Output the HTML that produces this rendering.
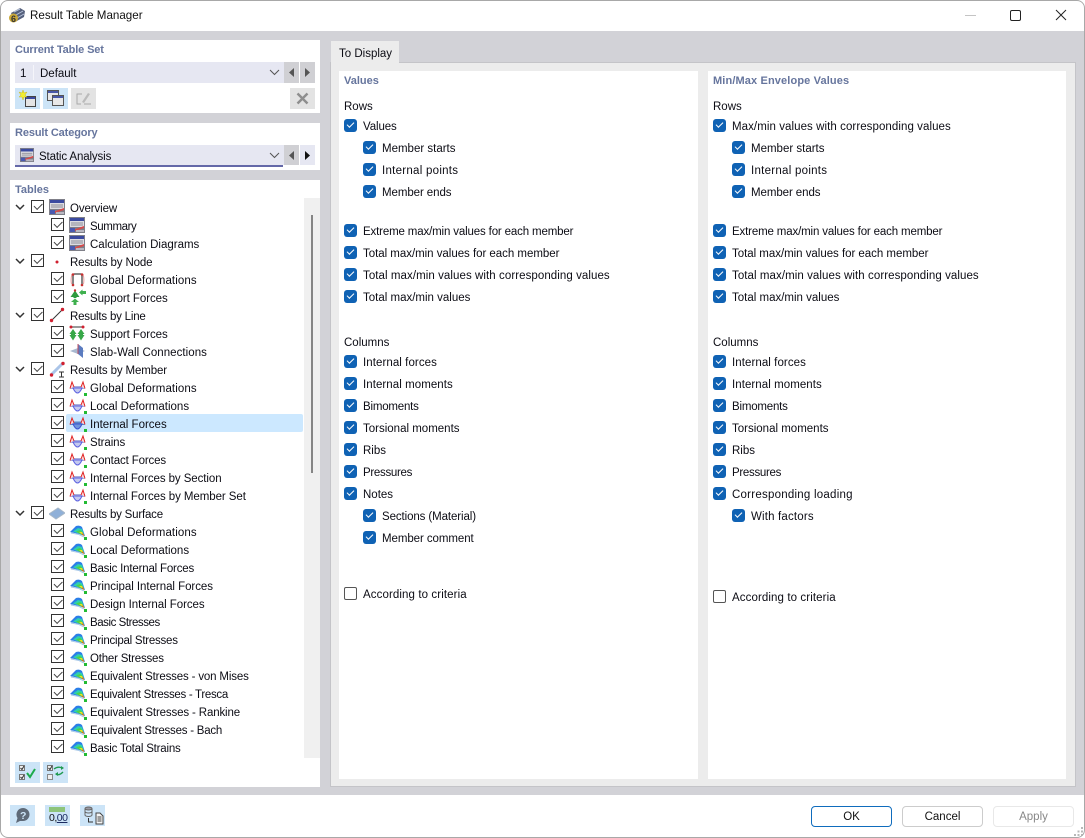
<!DOCTYPE html>
<html><head><meta charset="utf-8"><title>Result Table Manager</title>
<style>
html,body{margin:0;padding:0;width:1085px;height:838px;overflow:hidden;background:#fff}
body{position:relative;font-family:"Liberation Sans",sans-serif;font-size:11.5px;color:#0c0c14}
div,svg{position:absolute}
.t{line-height:16px;height:16px;white-space:nowrap;margin-top:1px}
.h{line-height:16px;height:16px;white-space:nowrap;font-weight:bold;color:#66759d;font-size:11px;margin-top:1px}
.p{background:#fff}
.cb{width:13px;height:13px;background:#0f62b4;border-radius:3px}
.cb:after{content:"";position:absolute;left:3px;top:2.5px;width:6px;height:3px;border-left:1px solid #fff;border-bottom:1px solid #fff;transform:rotate(-45deg)}
.cu{width:11px;height:11px;border:1px solid #555;border-radius:2px;background:#fff}
.k{width:11px;height:11px;border:1px solid #333;background:#fff}
.k:after{content:"";position:absolute;left:2px;top:1.5px;width:7px;height:3.5px;border-left:1px solid #444;border-bottom:1px solid #444;transform:rotate(-45deg)}
.ib{background:#cce4f7}
.btn{height:19px;line-height:21px;width:79px;text-align:center;border:1px solid #ccc;border-radius:4px;background:#fff}
</style></head><body>
<svg width="0" height="0" style="left:0;top:0">
<defs>
<symbol id="tb" viewBox="0 0 16 16"><rect x="0" y="0" width="16" height="16" fill="#7f7f88"/><rect x="1" y="1" width="14" height="3" fill="#3b4aa0"/><rect x="1" y="4" width="14" height="6" fill="#dcdce2"/><path d="M2 6h12M2 8h12" stroke="#8e8e98"/><path d="M1 14L15 9V11L6 14Z" fill="#d84a4a"/><rect x="1" y="11" width="5" height="4" fill="#4a5ab0"/><rect x="7" y="13" width="8" height="2" fill="#b8b8c2"/></symbol>
<symbol id="mb" viewBox="0 0 18 17"><rect x="1" y="7" width="15" height="3" fill="#a9aedd"/><path d="M4 9Q8.500 19 13 9Z" fill="#c4c9ee" stroke="#5a5fe0"/><path d="M1 9.500L3 3 5 8M12 8L14 3 16 9.500" fill="#fbdcdc" stroke="#e02020"/><rect x="15" y="14" width="3" height="3" fill="#22bb33"/></symbol>
<symbol id="mb2" viewBox="0 0 18 17"><rect x="1" y="6.500" width="15" height="3.500" fill="#5a86c8"/><path d="M4 9Q8.500 19 13 9Z" fill="#6f95dc" stroke="#3a4fd0"/><path d="M1 9.500L3 3 5 8M12 8L14 3 16 9.500" fill="#fbdcdc" stroke="#e02020"/><rect x="15" y="14" width="3" height="3" fill="#22bb33"/></symbol>
<symbol id="sf" viewBox="0 0 17 15"><path d="M0 7L6 1Q10 0 12 2L15 11 9 9Z" fill="#2b7fe8"/><path d="M3 6.500L8 3 12 4 14.500 11 9 8.500Z" fill="#2ed0b0"/><path d="M6 6.500L10 5 12.500 7 14.500 11 9 8.500Z" fill="#4fd24a"/><path d="M9 7L12 7 14.500 11Z" fill="#f0e020"/><path d="M11.500 9L13 8.500 14.500 11.500Z" fill="#f0501c"/><path d="M1 8L9 9.500 14 12" stroke="#a8c8e8" fill="none"/><rect x="14" y="12" width="3" height="3" fill="#22bb33"/></symbol>
</defs></svg>

<!-- window frame -->
<div style="left:0;top:31px;width:1085px;height:764px;background:#d2d2d7"></div>

<!-- title bar -->
<svg style="left:8px;top:7px" width="18" height="17" viewBox="0 0 18 17"><path d="M3 6L12 1 17 4 16 10 7 15Z" fill="#55607c"/><path d="M6 5L12 2M8 8L15 4M9 11L16 7" stroke="#b8c4dc"/><circle cx="5.500" cy="11" r="4.500" fill="#c9a83a"/><text x="3" y="15" font-size="9" font-family="Liberation Sans" font-weight="bold" fill="#333">6</text></svg>
<div class="t" style="left:30px;top:7px;font-size:11.6px;color:#111">Result Table Manager</div>
<div style="left:965px;top:15px;width:11px;height:1px;background:#c4c4c4"></div>
<div style="left:1010px;top:10px;width:9px;height:9px;border:1px solid #222;border-radius:2px"></div>
<svg style="left:1055px;top:9px" width="12" height="12"><path d="M1 1L11 11M11 1L1 11" stroke="#222" stroke-width="1"/></svg>

<!-- Current table set -->
<div class="p" style="left:10px;top:40px;width:310px;height:73px"></div>
<div class="h" style="left:15px;top:41px;letter-spacing:-.12px">Current Table Set</div>
<div style="left:15px;top:62px;width:269px;height:21px;background:#e6e7f2"></div>
<div style="left:33px;top:65px;width:1px;height:15px;background:#f5f5fa"></div>
<div class="t" style="left:20px;top:65px">1</div>
<div class="t" style="left:40px;top:65px">Default</div>
<svg style="left:269px;top:69px" width="11" height="7"><path d="M1 1L5.500 5.500 10 1" fill="none" stroke="#555"/></svg>
<div style="left:284px;top:62px;width:15px;height:21px;background:#d0d0d4"></div>
<div style="left:300px;top:62px;width:15px;height:21px;background:#d0d0d4"></div>
<svg style="left:288px;top:68px" width="7" height="9"><path d="M6 0V9L1 4.500Z" fill="#555"/></svg>
<svg style="left:304px;top:68px" width="7" height="9"><path d="M1 0V9L6 4.500Z" fill="#555"/></svg>
<div class="ib" style="left:15px;top:88px;width:25px;height:21px"></div>
<svg style="left:18px;top:90px" width="20" height="18" viewBox="0 0 20 18"><rect x="7.500" y="6.500" width="10" height="10" fill="#e4e4e4" stroke="#444"/><rect x="8" y="7" width="9" height="2" fill="#3b4aa0"/><path d="M5 0L6 3 9 2 7 5 9 7 6 7 5 10 4 7 1 7 3 5 1 2 4 3Z" fill="#f2ee30" stroke="#c8b820" stroke-width=".5"/></svg>
<div class="ib" style="left:43px;top:88px;width:25px;height:21px"></div>
<svg style="left:47px;top:90px" width="18" height="17" viewBox="0 0 18 17"><rect x="0.500" y="0.500" width="11" height="10" fill="#e8e8e8" stroke="#555"/><rect x="1" y="1" width="10" height="2" fill="#4a58a8"/><rect x="5.500" y="5.500" width="11" height="10" fill="#e8e8e8" stroke="#555"/><rect x="6" y="6" width="10" height="2" fill="#4a58a8"/></svg>
<div style="left:71px;top:88px;width:25px;height:21px;background:#e3e3e3"></div>
<svg style="left:76px;top:91px" width="16" height="15" viewBox="0 0 16 15"><path d="M6 3H1V13H5M8 13H15" fill="none" stroke="#aaa"/><path d="M6 11L12 2 14 3 8 12Z" fill="#bbb"/></svg>
<div style="left:290px;top:88px;width:25px;height:21px;background:#e3e3e3"></div>
<svg style="left:296px;top:92px" width="13" height="13"><path d="M1.500 1.500L11.500 11.500M11.500 1.500L1.500 11.500" stroke="#8e8e8e" stroke-width="2.400"/></svg>

<!-- Result category -->
<div class="p" style="left:10px;top:123px;width:310px;height:47px"></div>
<div class="h" style="left:15px;top:124px;letter-spacing:-.12px">Result Category</div>
<div style="left:15px;top:145px;width:269px;height:20px;background:#e6e7f2"></div>
<div style="left:15px;top:165px;width:268px;height:2px;background:#6468a8"></div>
<svg style="left:20px;top:148px" width="14" height="14"><use href="#tb"/></svg>
<div class="t" style="left:39px;top:148px;letter-spacing:-.13px">Static Analysis</div>
<svg style="left:269px;top:152px" width="11" height="7"><path d="M1 1L5.500 5.500 10 1" fill="none" stroke="#555"/></svg>
<div style="left:284px;top:145px;width:15px;height:20px;background:#d0d0d4"></div>
<div style="left:300px;top:145px;width:15px;height:20px;background:#e6e7f2"></div>
<svg style="left:288px;top:151px" width="7" height="9"><path d="M6 0V9L1 4.500Z" fill="#555"/></svg>
<svg style="left:304px;top:151px" width="7" height="9"><path d="M1 0V9L6 4.500Z" fill="#111"/></svg>

<!-- Tables -->
<div class="p" style="left:10px;top:180px;width:310px;height:607px"></div>
<div class="h" style="left:15px;top:181px">Tables</div>
<div style="left:304px;top:198px;width:16px;height:560px;background:#f0f0f0"></div>
<div style="left:311px;top:215px;width:2px;height:258px;background:#858585"></div>
<div style="left:66px;top:414px;width:237px;height:18px;background:#cce8ff;border-radius:2px"></div>

<!-- chevrons -->
<svg style="left:15px;top:204px" width="10" height="7"><path d="M1 1L5 5 9 1" fill="none" stroke="#333" stroke-width="1.500"/></svg>
<svg style="left:15px;top:258px" width="10" height="7"><path d="M1 1L5 5 9 1" fill="none" stroke="#333" stroke-width="1.500"/></svg>
<svg style="left:15px;top:312px" width="10" height="7"><path d="M1 1L5 5 9 1" fill="none" stroke="#333" stroke-width="1.500"/></svg>
<svg style="left:15px;top:366px" width="10" height="7"><path d="M1 1L5 5 9 1" fill="none" stroke="#333" stroke-width="1.500"/></svg>
<svg style="left:15px;top:510px" width="10" height="7"><path d="M1 1L5 5 9 1" fill="none" stroke="#333" stroke-width="1.500"/></svg>

<!-- tree top-level -->
<div class="k" style="left:31px;top:200px"></div><svg style="left:49px;top:199px" width="16" height="16"><use href="#tb"/></svg><div class="t" style="left:70px;top:200px;letter-spacing:-.1px">Overview</div>
<div class="k" style="left:31px;top:254px"></div><svg style="left:55px;top:260px" width="4" height="4"><circle cx="2" cy="2" r="1.500" fill="#d02030"/></svg><div class="t" style="left:70px;top:254px;letter-spacing:-.13px">Results by Node</div>
<div class="k" style="left:31px;top:308px"></div><svg style="left:49px;top:307px" width="16" height="16"><path d="M2 14L14 2" stroke="#333"/><circle cx="2.500" cy="13.500" r="1.700" fill="#d02030"/><circle cx="13.500" cy="2.500" r="1.700" fill="#d02030"/></svg><div class="t" style="left:70px;top:308px;letter-spacing:-.2px">Results by Line</div>
<div class="k" style="left:31px;top:362px"></div><svg style="left:49px;top:361px" width="17" height="17"><path d="M2 14L14 2" stroke="#aac4e8" stroke-width="3"/><circle cx="2.500" cy="14" r="1.700" fill="#d02030"/><circle cx="14" cy="2.500" r="1.700" fill="#d02030"/><path d="M10 11h5M12.500 11v5M10 16h5" stroke="#333" fill="none"/></svg><div class="t" style="left:70px;top:362px;letter-spacing:-.12px">Results by Member</div>
<div class="k" style="left:31px;top:506px"></div><svg style="left:49px;top:507px" width="16" height="13"><path d="M0 7L9 1 16 6 7 12Z" fill="#8fb0d8" stroke="#a8b8c8"/></svg><div class="t" style="left:70px;top:506px;letter-spacing:-.2px">Results by Surface</div>

<!-- tree children -->
<div class="k" style="left:51px;top:218px"></div><svg style="left:69px;top:217px" width="16" height="16"><use href="#tb"/></svg><div class="t" style="left:90px;top:218px;letter-spacing:-.4px">Summary</div>
<div class="k" style="left:51px;top:236px"></div><svg style="left:69px;top:235px" width="16" height="16"><use href="#tb"/></svg><div class="t" style="left:90px;top:236px">Calculation Diagrams</div>
<div class="k" style="left:51px;top:272px"></div><svg style="left:70px;top:272px" width="15" height="15"><path d="M3 13V3Q3 2 4 2H11Q12 2 12 3V13" fill="none" stroke="#444" stroke-width="1.300"/><path d="M1.500 12Q.5 7 2 2M13.500 12Q14.500 7 13 2" fill="none" stroke="#e8a0a0"/><circle cx="3" cy="2.500" r="1.300" fill="#c83030"/><circle cx="12" cy="2.500" r="1.300" fill="#c83030"/><circle cx="3" cy="13" r="1.300" fill="#c83030"/><circle cx="12" cy="13" r="1.300" fill="#c83030"/></svg><div class="t" style="left:90px;top:272px;letter-spacing:.1px">Global Deformations</div>
<div class="k" style="left:51px;top:290px"></div><svg style="left:70px;top:289px" width="16" height="16"><path d="M5 1.500L.5 8H3.500V9H6.500V8H9.500Z" fill="#2f9a3e"/><path d="M9 3.500L12.500 .5V2H16V5H12.500V6.500Z" fill="#3fb04e"/><path d="M5 9.500L1 13H3.500V16H6.500V13H9Z" fill="#3fb04e"/><circle cx="5" cy="1.500" r="1.200" fill="#c83030"/></svg><div class="t" style="left:90px;top:290px;letter-spacing:-.07px">Support Forces</div>
<div class="k" style="left:51px;top:326px"></div><svg style="left:69px;top:325px" width="16" height="16"><path d="M2 2H14" stroke="#333"/><circle cx="2" cy="2" r="1.500" fill="#d02030"/><circle cx="14" cy="2" r="1.500" fill="#d02030"/><path d="M4 4L.5 9H2V10L.5 10 4 15.500 7.500 10H6V9H7.500Z" fill="#38a848"/><path d="M12 4L8.500 9H10V10L8.500 10 12 15.500 15.500 10H14V9H15.500Z" fill="#38a848"/></svg><div class="t" style="left:90px;top:326px;letter-spacing:-.07px">Support Forces</div>
<div class="k" style="left:51px;top:344px"></div><svg style="left:69px;top:343px" width="16" height="16"><path d="M1 8L9 5 16 8 9 11Z" fill="#a8b8d0"/><path d="M9 1L14 5V15L9 11Z" fill="#5b7cc0"/><path d="M9 1V11" stroke="#c05060"/></svg><div class="t" style="left:90px;top:344px;letter-spacing:.05px">Slab-Wall Connections</div>

<div class="k" style="left:51px;top:380px"></div><svg style="left:69px;top:379px" width="18" height="17"><use href="#mb"/></svg><div class="t" style="left:90px;top:380px;letter-spacing:.1px">Global Deformations</div>
<div class="k" style="left:51px;top:398px"></div><svg style="left:69px;top:397px" width="18" height="17"><use href="#mb"/></svg><div class="t" style="left:90px;top:398px">Local Deformations</div>
<div class="k" style="left:51px;top:416px"></div><svg style="left:69px;top:415px" width="18" height="17"><use href="#mb2"/></svg><div class="t" style="left:90px;top:416px">Internal Forces</div>
<div class="k" style="left:51px;top:434px"></div><svg style="left:69px;top:433px" width="18" height="17"><use href="#mb"/></svg><div class="t" style="left:90px;top:434px;letter-spacing:-.1px">Strains</div>
<div class="k" style="left:51px;top:452px"></div><svg style="left:69px;top:451px" width="18" height="17"><use href="#mb"/></svg><div class="t" style="left:90px;top:452px;letter-spacing:-.14px">Contact Forces</div>
<div class="k" style="left:51px;top:470px"></div><svg style="left:69px;top:469px" width="18" height="17"><use href="#mb"/></svg><div class="t" style="left:90px;top:470px;letter-spacing:-.08px">Internal Forces by Section</div>
<div class="k" style="left:51px;top:488px"></div><svg style="left:69px;top:487px" width="18" height="17"><use href="#mb"/></svg><div class="t" style="left:90px;top:488px;letter-spacing:-.07px">Internal Forces by Member Set</div>

<div class="k" style="left:51px;top:524px"></div><svg style="left:70px;top:525px" width="17" height="15"><use href="#sf"/></svg><div class="t" style="left:90px;top:524px;letter-spacing:.1px">Global Deformations</div>
<div class="k" style="left:51px;top:542px"></div><svg style="left:70px;top:543px" width="17" height="15"><use href="#sf"/></svg><div class="t" style="left:90px;top:542px">Local Deformations</div>
<div class="k" style="left:51px;top:560px"></div><svg style="left:70px;top:561px" width="17" height="15"><use href="#sf"/></svg><div class="t" style="left:90px;top:560px;letter-spacing:-.19px">Basic Internal Forces</div>
<div class="k" style="left:51px;top:578px"></div><svg style="left:70px;top:579px" width="17" height="15"><use href="#sf"/></svg><div class="t" style="left:90px;top:578px;letter-spacing:-.04px">Principal Internal Forces</div>
<div class="k" style="left:51px;top:596px"></div><svg style="left:70px;top:597px" width="17" height="15"><use href="#sf"/></svg><div class="t" style="left:90px;top:596px;letter-spacing:-.05px">Design Internal Forces</div>
<div class="k" style="left:51px;top:614px"></div><svg style="left:70px;top:615px" width="17" height="15"><use href="#sf"/></svg><div class="t" style="left:90px;top:614px;letter-spacing:-.45px">Basic Stresses</div>
<div class="k" style="left:51px;top:632px"></div><svg style="left:70px;top:633px" width="17" height="15"><use href="#sf"/></svg><div class="t" style="left:90px;top:632px;letter-spacing:-.24px">Principal Stresses</div>
<div class="k" style="left:51px;top:650px"></div><svg style="left:70px;top:651px" width="17" height="15"><use href="#sf"/></svg><div class="t" style="left:90px;top:650px;letter-spacing:-.21px">Other Stresses</div>
<div class="k" style="left:51px;top:668px"></div><svg style="left:70px;top:669px" width="17" height="15"><use href="#sf"/></svg><div class="t" style="left:90px;top:668px;letter-spacing:-.16px">Equivalent Stresses - von Mises</div>
<div class="k" style="left:51px;top:686px"></div><svg style="left:70px;top:687px" width="17" height="15"><use href="#sf"/></svg><div class="t" style="left:90px;top:686px;letter-spacing:-.3px">Equivalent Stresses - Tresca</div>
<div class="k" style="left:51px;top:704px"></div><svg style="left:70px;top:705px" width="17" height="15"><use href="#sf"/></svg><div class="t" style="left:90px;top:704px;letter-spacing:-.14px">Equivalent Stresses - Rankine</div>
<div class="k" style="left:51px;top:722px"></div><svg style="left:70px;top:723px" width="17" height="15"><use href="#sf"/></svg><div class="t" style="left:90px;top:722px;letter-spacing:-.23px">Equivalent Stresses - Bach</div>
<div class="k" style="left:51px;top:740px"></div><svg style="left:70px;top:741px" width="17" height="15"><use href="#sf"/></svg><div class="t" style="left:90px;top:740px;letter-spacing:-.2px">Basic Total Strains</div>

<!-- tree buttons -->
<div class="ib" style="left:15px;top:762px;width:25px;height:21px"></div>
<svg style="left:19px;top:764px" width="20" height="18" viewBox="0 0 20 18"><rect x="0.500" y="1.500" width="5" height="5" fill="#eee" stroke="#777"/><rect x="0.500" y="10.500" width="5" height="5" fill="#eee" stroke="#777"/><path d="M1.500 4L3 5.500 5 2M1.500 13L3 14.500 5 11" fill="none" stroke="#333"/><path d="M8 9L11 13 16 5" fill="none" stroke="#1cab4c" stroke-width="2"/></svg>
<div class="ib" style="left:43px;top:762px;width:25px;height:21px"></div>
<svg style="left:47px;top:764px" width="20" height="18" viewBox="0 0 20 18"><rect x="0.500" y="1.500" width="5" height="5" fill="#eee" stroke="#777"/><rect x="0.500" y="10.500" width="5" height="5" fill="#eee" stroke="#888"/><path d="M1.500 4L3 5.500 5 2" fill="none" stroke="#333"/><path d="M7 5Q11 2 15 4M9 10Q12 12 16 8" fill="none" stroke="#1f9a50" stroke-width="1.400"/><path d="M14 2L17 4 14 6ZM11 8L8 10 11 12Z" fill="#1f9a50"/></svg>

<!-- Tab area -->
<div style="left:330px;top:63px;width:744px;height:723px;background:#ececec;border:1px solid #c4c4c8;border-top:0"></div>
<div style="left:330px;top:62px;width:746px;height:1px;background:#c4c4c8"></div>
<div style="left:331px;top:41px;width:68px;height:22px;background:#ececec"></div>
<div class="t" style="left:339px;top:45px">To Display</div>
<div class="p" style="left:339px;top:71px;width:359px;height:708px"></div>
<div class="p" style="left:708px;top:71px;width:358px;height:708px"></div>

<!-- Left panel -->
<div class="h" style="left:344px;top:72px">Values</div>
<div class="t" style="left:344px;top:98px">Rows</div>
<div class="cb" style="left:344px;top:119px"></div><div class="t" style="left:363px;top:118px;letter-spacing:-.1px">Values</div>
<div class="cb" style="left:363px;top:141px"></div><div class="t" style="left:382px;top:140px">Member starts</div>
<div class="cb" style="left:363px;top:163px"></div><div class="t" style="left:382px;top:162px;letter-spacing:.27px">Internal points</div>
<div class="cb" style="left:363px;top:185px"></div><div class="t" style="left:382px;top:184px;letter-spacing:-.08px">Member ends</div>
<div class="cb" style="left:344px;top:224px"></div><div class="t" style="left:363px;top:223px;letter-spacing:-.15px">Extreme max/min values for each member</div>
<div class="cb" style="left:344px;top:246px"></div><div class="t" style="left:363px;top:245px;letter-spacing:-.03px">Total max/min values for each member</div>
<div class="cb" style="left:344px;top:268px"></div><div class="t" style="left:363px;top:267px;letter-spacing:.07px">Total max/min values with corresponding values</div>
<div class="cb" style="left:344px;top:290px"></div><div class="t" style="left:363px;top:289px">Total max/min values</div>
<div class="t" style="left:344px;top:334px">Columns</div>
<div class="cb" style="left:344px;top:355px"></div><div class="t" style="left:363px;top:354px;letter-spacing:.07px">Internal forces</div>
<div class="cb" style="left:344px;top:377px"></div><div class="t" style="left:363px;top:376px;letter-spacing:.06px">Internal moments</div>
<div class="cb" style="left:344px;top:399px"></div><div class="t" style="left:363px;top:398px;letter-spacing:-.2px">Bimoments</div>
<div class="cb" style="left:344px;top:421px"></div><div class="t" style="left:363px;top:420px">Torsional moments</div>
<div class="cb" style="left:344px;top:443px"></div><div class="t" style="left:363px;top:442px">Ribs</div>
<div class="cb" style="left:344px;top:465px"></div><div class="t" style="left:363px;top:464px;letter-spacing:-.3px">Pressures</div>
<div class="cb" style="left:344px;top:487px"></div><div class="t" style="left:363px;top:486px">Notes</div>
<div class="cb" style="left:363px;top:509px"></div><div class="t" style="left:382px;top:508px;letter-spacing:-.1px">Sections (Material)</div>
<div class="cb" style="left:363px;top:531px"></div><div class="t" style="left:382px;top:530px;letter-spacing:-.07px">Member comment</div>
<div class="cu" style="left:344px;top:587px"></div><div class="t" style="left:363px;top:586px;letter-spacing:.1px">According to criteria</div>

<!-- Right panel -->
<div class="h" style="left:713px;top:72px;letter-spacing:.13px">Min/Max Envelope Values</div>
<div class="t" style="left:713px;top:98px">Rows</div>
<div class="cb" style="left:713px;top:119px"></div><div class="t" style="left:732px;top:118px;letter-spacing:.07px">Max/min values with corresponding values</div>
<div class="cb" style="left:732px;top:141px"></div><div class="t" style="left:751px;top:140px">Member starts</div>
<div class="cb" style="left:732px;top:163px"></div><div class="t" style="left:751px;top:162px;letter-spacing:.27px">Internal points</div>
<div class="cb" style="left:732px;top:185px"></div><div class="t" style="left:751px;top:184px;letter-spacing:-.08px">Member ends</div>
<div class="cb" style="left:713px;top:224px"></div><div class="t" style="left:732px;top:223px;letter-spacing:-.15px">Extreme max/min values for each member</div>
<div class="cb" style="left:713px;top:246px"></div><div class="t" style="left:732px;top:245px;letter-spacing:-.03px">Total max/min values for each member</div>
<div class="cb" style="left:713px;top:268px"></div><div class="t" style="left:732px;top:267px;letter-spacing:.07px">Total max/min values with corresponding values</div>
<div class="cb" style="left:713px;top:290px"></div><div class="t" style="left:732px;top:289px">Total max/min values</div>
<div class="t" style="left:713px;top:334px">Columns</div>
<div class="cb" style="left:713px;top:355px"></div><div class="t" style="left:732px;top:354px;letter-spacing:.07px">Internal forces</div>
<div class="cb" style="left:713px;top:377px"></div><div class="t" style="left:732px;top:376px;letter-spacing:.06px">Internal moments</div>
<div class="cb" style="left:713px;top:399px"></div><div class="t" style="left:732px;top:398px;letter-spacing:-.2px">Bimoments</div>
<div class="cb" style="left:713px;top:421px"></div><div class="t" style="left:732px;top:420px">Torsional moments</div>
<div class="cb" style="left:713px;top:443px"></div><div class="t" style="left:732px;top:442px">Ribs</div>
<div class="cb" style="left:713px;top:465px"></div><div class="t" style="left:732px;top:464px;letter-spacing:-.3px">Pressures</div>
<div class="cb" style="left:713px;top:487px"></div><div class="t" style="left:732px;top:486px;letter-spacing:.24px">Corresponding loading</div>
<div class="cb" style="left:732px;top:509px"></div><div class="t" style="left:751px;top:508px;letter-spacing:.17px">With factors</div>
<div class="cu" style="left:713px;top:590px"></div><div class="t" style="left:732px;top:589px;letter-spacing:.1px">According to criteria</div>

<!-- Footer -->
<div class="ib" style="left:10px;top:805px;width:25px;height:21px"></div>
<svg style="left:14px;top:807px" width="17" height="17" viewBox="0 0 17 17"><path d="M9 1A6.500 6.500 0 0 1 9 14H6L2 16 3.500 11A6.500 6.500 0 0 1 9 1Z" fill="#5f6a78"/><text x="6" y="12" font-size="10.500" font-weight="bold" font-family="Liberation Sans" fill="#cce4f7">?</text></svg>
<div class="ib" style="left:45px;top:805px;width:25px;height:21px"></div>
<div style="left:49px;top:807px;width:16px;height:5px;background:#8dc47a"></div>
<div class="t" style="left:49px;top:809px;font-size:10.5px;letter-spacing:-.5px;color:#1a2a60"><span style="color:#111">0,</span><span style="text-decoration:underline">00</span></div>
<div class="ib" style="left:80px;top:805px;width:25px;height:21px"></div>
<svg style="left:84px;top:806px" width="20" height="19" viewBox="0 0 20 19"><ellipse cx="4.500" cy="2.500" rx="3.500" ry="1.500" fill="#9a9aa4" stroke="#666"/><path d="M1 2.500V9M8 2.500V9M1 5.500A3.500 1.500 0 0 0 8 5.500M1 9A3.500 1.500 0 0 0 8 9" fill="none" stroke="#666"/><path d="M4.500 12V16H9" fill="none" stroke="#333"/><path d="M12 7H16L19 10V18H12Z" fill="#f4f4f4" stroke="#444"/><path d="M13.500 11H17.500M13.500 13H17.500M13.500 15H17.500" stroke="#444"/></svg>

<div class="btn" style="left:811px;top:806px;border-color:#0f6cbd;color:#111">OK</div>
<div class="btn" style="left:902px;top:806px;color:#111">Cancel</div>
<div class="btn" style="left:993px;top:806px;border-color:#e8e8e8;color:#888">Apply</div>
<svg style="left:1073px;top:826px" width="10" height="10"><path d="M8 1h2v2H8zM4.500 4.500h2v2h-2zM8 4.500h2v2H8zM1 8h2v2H1zM4.500 8h2v2h-2zM8 8h2v2H8z" fill="#b8b8b8"/></svg>

<!-- window outline -->
<div style="left:0;top:0;width:1083px;height:836px;border:1px solid #a8a8a8;border-radius:8px;box-shadow:0 0 0 6px #fff"></div>
</body></html>
